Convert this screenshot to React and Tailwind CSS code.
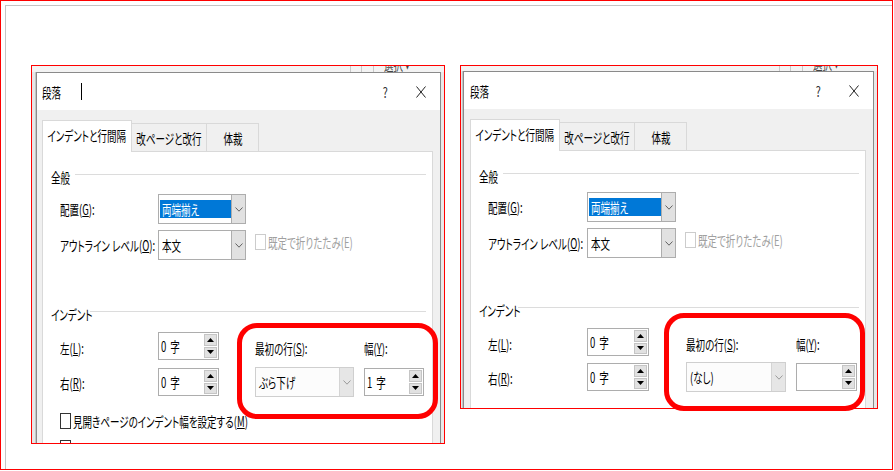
const FONT = "font-['Noto_Sans_CJK_JP','Noto_Sans',sans-serif] [font-feature-settings:'palt']";

// the screenshot is squeezed horizontally, so text is narrowed the same way
function T({ children, className = "" }) {
  return (
    <span className={`inline-block origin-left scale-x-[0.68] whitespace-nowrap ${className}`}>
      {children}
    </span>
  );
}

function TC({ children }) {
  return <span className="inline-block origin-center scale-x-[0.68] whitespace-nowrap">{children}</span>;
}

const Chevron = ({ soft }) => (
  <svg width="8" height="5" viewBox="0 0 8 5">
    <path d="M0.5 0.5 L4 4.2 L7.5 0.5" stroke={soft ? "#9a9a9a" : "#606060"} strokeWidth="1" fill="none" />
  </svg>
);

const Tri = ({ up }) => (
  <svg width="7" height="4" viewBox="0 0 7 4">
    <path d={up ? "M0 4 L3.5 0 L7 4Z" : "M0 0 L3.5 4 L7 0Z"} fill="#000" />
  </svg>
);

function Select({ w, children, hi, soft }) {
  return (
    <div className={`${w} h-[30px] shrink-0 flex border ${soft ? "border-[#cfcfcf] bg-[#fcfcfc]" : "border-[#adadad] bg-white"}`}>
      <div className="flex-1 flex items-center pl-[1px] py-[5px]">
        {hi ? (
          <div className="h-full w-full bg-[#0078d7] text-white flex items-center pl-[2px]">
            <T>{children}</T>
          </div>
        ) : (
          <div className="pl-[2px]">
            <T>{children}</T>
          </div>
        )}
      </div>
      <div className={`w-[14px] flex items-center justify-center border-l ${soft ? "border-[#d4d4d4] bg-[#e6e6e6]" : "border-[#adadad] bg-[#e1e1e1]"}`}>
        <Chevron soft={soft} />
      </div>
    </div>
  );
}

function Spin({ w, num }) {
  return (
    <div className={`${w} h-[28px] flex border border-[#adadad] bg-white`}>
      <div className="flex-1 flex items-center pl-[2px] pb-[1px]">
        {num && (
          <T>
            {num}
            <span className="ml-[6px]">字</span>
          </T>
        )}
      </div>
      <div className="w-[14px] flex flex-col gap-px py-[1px] pr-[1px]">
        <div className="flex-1 bg-[#e1e1e1] border border-[#c5c5c5] flex items-center justify-center">
          <Tri up />
        </div>
        <div className="flex-1 bg-[#e1e1e1] border border-[#c5c5c5] flex items-center justify-center">
          <Tri />
        </div>
      </div>
    </div>
  );
}

function Heading({ label, w, className = "" }) {
  return (
    <div className={`flex h-[20px] items-center pl-[8px] pr-[6px] ${className}`}>
      <div className={`${w} shrink-0`}>
        <T>{label}</T>
      </div>
      <div className="flex-1 h-px bg-[#dcdcdc] self-start mt-[7px]" />
    </div>
  );
}

function Box({ disabled }) {
  return <div className={`w-[11px] h-[16px] shrink-0 border ${disabled ? "border-[#cccccc]" : "border-[#333333]"} bg-white`} />;
}

const LEFT = {
  shot: "w-[414px] h-[379px]",
  top: "h-[6px]",
  lstrip: "w-[4px]",
  dialog: "w-[405px]",
  pad: "pl-[5px]",
  panel: "w-[391px]",
  r1: "mt-[7px]",
  h2: "mt-[44px]",
  grid: "grid-cols-[98px_61px_36px_99px_10px_60px] gap-y-[8px]",
  lab: "w-[98px]",
  sel: "w-[88px]",
  sp1: "w-[61px]",
  fsel: "w-[99px]",
  sp2: "w-[60px]",
  red: "left-[205px] top-[257px] w-[201px] h-[96px]",
  cursor: true,
  first: "ぶら下げ",
  width: "1",
};

const RIGHT = {
  shot: "w-[418px] h-[344px]",
  top: "h-[5px]",
  lstrip: "w-[2px]",
  dialog: "w-[411px]",
  pad: "pl-[6px]",
  panel: "w-[396px]",
  r1: "mt-[6px]",
  h2: "mt-[42px]",
  grid: "grid-cols-[99px_62px_37px_100px_10px_61px] gap-y-[7px]",
  lab: "w-[99px]",
  sel: "w-[89px]",
  sp1: "w-[62px]",
  fsel: "w-[100px]",
  sp2: "w-[61px]",
  red: "left-[203px] top-[247px] w-[201px] h-[98px]",
  cursor: false,
  first: "(なし)",
  width: "",
};

function Dialog({ c }) {
  return (
    <div className={`${c.dialog} h-[420px] shrink-0 flex flex-col border-x border-t border-[#8a8a8a] bg-[#f0f0f0]`}>
      {/* title bar */}
      <div className={`h-[37px] bg-white flex items-center ${c.pad} pr-[14px]`}>
        <T>段落</T>
        {c.cursor && <span className="ml-[11px] w-px h-[17px] bg-black" />}
        <span className="ml-auto inline-block scale-x-[0.76] text-[#333]">?</span>
        <svg className="ml-[27px]" width="10" height="12" viewBox="0 0 10 12">
          <path d="M0.5 0.5 L9.5 11.5 M9.5 0.5 L0.5 11.5" stroke="#222" strokeWidth="1" fill="none" />
        </svg>
      </div>

      {/* tabs */}
      <div className={`pt-[10px] ${c.pad} pr-[7px]`}>
        <div className="relative z-10 flex items-end h-[31px]">
          <div className="w-[90px] h-[32px] -mb-px bg-white border-x border-t border-[#d9d9d9] flex items-center justify-center pb-[3px]">
            <TC>インデントと行間隔</TC>
          </div>
          <div className="w-[75px] h-[28px] border-r border-t border-[#d9d9d9] flex items-center justify-center">
            <TC>改ページと改行</TC>
          </div>
          <div className="w-[52px] h-[28px] border-r border-t border-[#d9d9d9] flex items-center justify-center">
            <TC>体裁</TC>
          </div>
        </div>

        {/* panel */}
        <div className={`${c.panel} h-[330px] bg-white border border-[#d9d9d9] pt-[15px]`}>
          <Heading label="全般" w="w-[24px]" />

          <div className={`flex h-[30px] items-center pl-[17px] ${c.r1}`}>
            <div className={`${c.lab} shrink-0`}>
              <T>
                配置(<u>G</u>):
              </T>
            </div>
            <Select w={c.sel} hi>
              両端揃え
            </Select>
          </div>

          <div className="flex h-[30px] items-center pl-[17px] mt-[6px]">
            <div className={`${c.lab} shrink-0`}>
              <T>
                アウトライン レベル(<u>O</u>):
              </T>
            </div>
            <Select w={c.sel}>本文</Select>
            <div className="ml-[9px] flex items-center gap-[2px] text-[#a0a0a0] -mt-[6px]">
              <Box disabled />
              <T>既定で折りたたみ(E)</T>
            </div>
          </div>

          <Heading label="インデント" w="w-[39px]" className={c.h2} />

          <div className={`grid ${c.grid} grid-rows-[28px_28px] pl-[17px] mt-[8px]`}>
            <div className="self-center pt-[3px]">
              <T>
                左(<u>L</u>):
              </T>
            </div>
            <Spin w={c.sp1} num="0" />
            <div />
            <div className="self-center pt-[3px]">
              <T>
                最初の行(<u>S</u>):
              </T>
            </div>
            <div />
            <div className="self-center pt-[3px]">
              <T>
                幅(<u>Y</u>):
              </T>
            </div>

            <div className="self-center pt-[2px]">
              <T>
                右(<u>R</u>):
              </T>
            </div>
            <Spin w={c.sp1} num="0" />
            <div />
            <div className="self-center">
              <Select w={c.fsel} soft>
                {c.first}
              </Select>
            </div>
            <div />
            <Spin w={c.sp2} num={c.width} />
          </div>

          <div className="flex items-center gap-[2px] pl-[17px] mt-[17px] h-[16px]">
            <Box />
            <T>
              見開きページのインデント幅を設定する(<u>M</u>)
            </T>
          </div>
          <div className="pl-[17px] mt-[11px]">
            <Box />
          </div>
        </div>
      </div>
    </div>
  );
}

function Shot({ c }) {
  return (
    <div className={`${c.shot} shrink-0 relative border border-[#ff0000]`}>
      <div className="w-full h-full overflow-hidden flex flex-col bg-[#ececec]">
        {/* ribbon remains above the dialog */}
        <div className={`${c.top} shrink-0 flex items-end overflow-hidden bg-[#f3f3f3] text-[#444]`}>
          <div className="flex items-end h-[16px] pl-[318px]">
            <div className="w-px h-full bg-[#c8c8c8]" />
            <div className="w-px h-full bg-[#c8c8c8] ml-[10px]" />
            <div className="w-px h-full bg-[#c8c8c8] ml-[11px]" />
            <div className="ml-[10px] leading-[16px]">
              <T>選択 ▾</T>
            </div>
          </div>
        </div>
        <div className="flex flex-1">
          <div className={`${c.lstrip} shrink-0 bg-[#e6e6e6] border-r border-[#c4c4c4]`} />
          <Dialog c={c} />
          <div className="flex-1 bg-[#e9e9e9]" />
        </div>
      </div>
      {/* red annotation */}
      <div className={`absolute ${c.red} border-[5px] border-[#ff0000] rounded-[20px]`} />
    </div>
  );
}

export default function App() {
  return (
    <div className={`w-[894px] h-[471px] bg-white text-black text-[14px] leading-[18px] ${FONT}`}>
      <div className="w-[893px] h-[470px] border border-[#ff0000] pl-[4px] pt-[4px]">
        <div className="h-full border-l border-t border-[#c4c4c4] flex items-start pl-[25px] pt-[59px] gap-[15px]">
          <Shot c={LEFT} />
          <Shot c={RIGHT} />
        </div>
      </div>
    </div>
  );
}
